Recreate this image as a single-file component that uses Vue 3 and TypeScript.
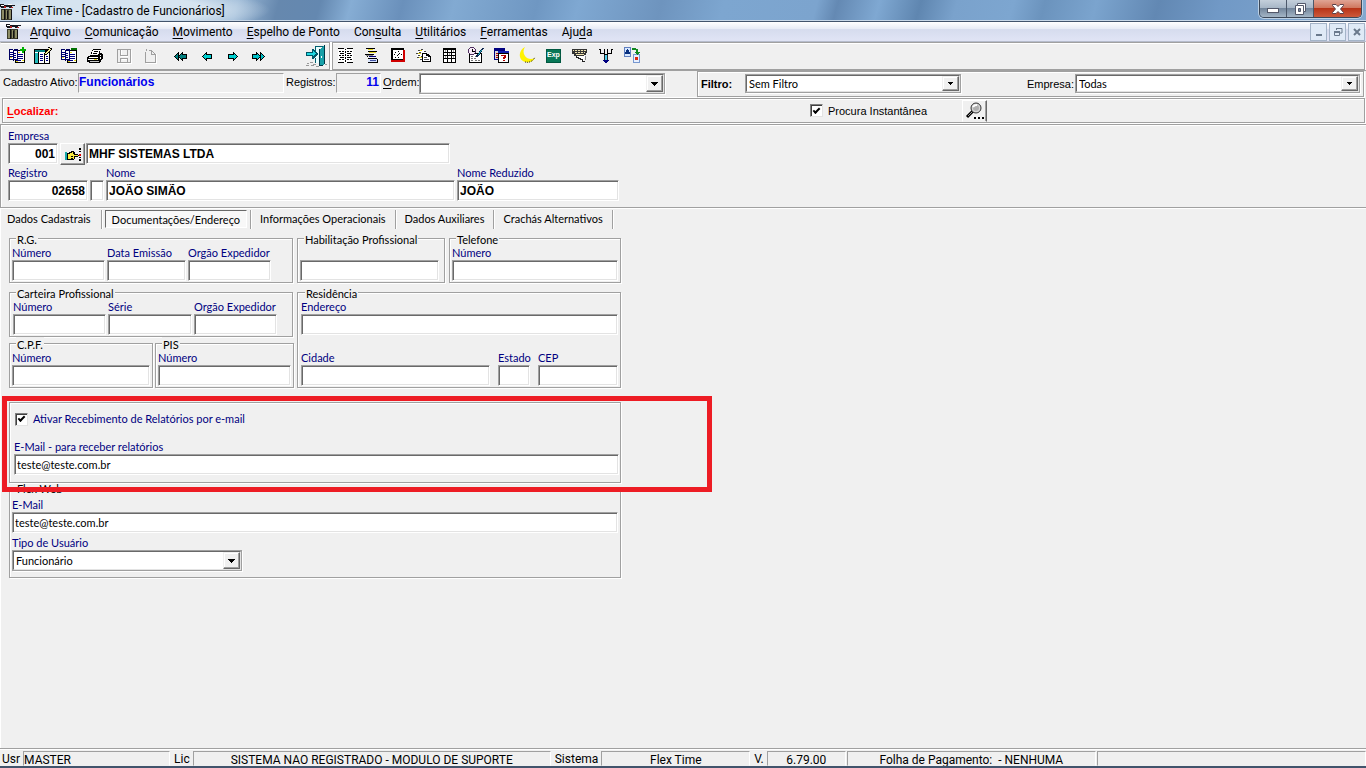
<script setup lang="ts">
import { ref } from 'vue'

interface MenuItem { pre: string; key: string; post: string }

const menus: MenuItem[] = [
  { pre: '', key: 'A', post: 'rquivo' },
  { pre: '', key: 'C', post: 'omunicação' },
  { pre: '', key: 'M', post: 'ovimento' },
  { pre: '', key: 'E', post: 'spelho de Ponto' },
  { pre: 'Con', key: 's', post: 'ulta' },
  { pre: '', key: 'U', post: 'tilitários' },
  { pre: '', key: 'F', post: 'erramentas' },
  { pre: 'Aju', key: 'd', post: 'a' },
]

const tabs = ['Dados Cadastrais', 'Documentações/Endereço', 'Informações Operacionais', 'Dados Auxiliares', 'Crachás Alternativos']
const activeTab = ref(1)

const instant = ref(true)
const sendReports = ref(true)
const companyCode = ref('001')
const companyName = ref('MHF SISTEMAS LTDA')
const register = ref('02658')
const digit = ref('')
const fullName = ref('JOÃO SIMÃO')
const shortName = ref('JOÃO')
const reportMail = ref('teste@teste.com.br')
const webMail = ref('teste@teste.com.br')
</script>

<template>
  <div class="window">
    <header class="titlebar">
      <svg class="app-icon" width="16" height="18" viewBox="0 0 16 18" shape-rendering="crispEdges">
        <path d="M0 1h4v1h2v2H4v1H1V4H0zM6 2h9v1h-3v2H9V4H6z" fill="#16161c" />
        <path d="M1 2h3v1H1zM8 1h4v1H8z" fill="#fff" />
        <path d="M4 3h2v2H4zM11 4h2v1h-2z" fill="#b02020" />
        <path d="M1 6h11v11H1z" fill="#3c3c2c" />
        <path d="M2 7h2v9H2zM6 7h1v9H6zM9 7h2v9H9z" fill="#8c8c66" />
        <path d="M4 6h1v11H4zM7 8h1v8H7zM11 7h1v10h-1z" fill="#111" />
      </svg>
      <h1>Flex Time - [Cadastro de Funcionários]</h1>
      <div class="win-buttons">
        <button type="button" class="wb" aria-label="Minimizar">
          <svg width="14" height="12" viewBox="0 0 14 12"><rect x="1.5" y="5.500" width="11" height="4" fill="#fff" stroke="#53586a" /></svg>
        </button>
        <button type="button" class="wb" aria-label="Restaurar">
          <svg width="14" height="14" viewBox="0 0 14 14"><path d="M4.500 1.500h8v8h-2v3h-8v-9h2z" fill="#fff" stroke="#53586a" /><path d="M5.500 6.500h2v3h-2z" fill="#7a8ba0" stroke="#53586a" /><path d="M4.500 3.500h6v6" fill="none" stroke="#53586a" /></svg>
        </button>
        <button type="button" class="wb close" aria-label="Fechar">
          <svg width="14" height="12" viewBox="0 0 14 12"><path d="M1.500 1.500h3.500l2 2 2-2h3.500v1L9.500 6l3 3.500v1H9l-2-2-2 2H1.500v-1l3-3.500-3-3.500z" fill="#fff" stroke="#5a4048" /></svg>
        </button>
      </div>
    </header>

    <nav class="menubar">
      <svg class="app-icon" width="16" height="18" viewBox="0 0 16 18" shape-rendering="crispEdges">
        <path d="M0 1h4v1h2v2H4v1H1V4H0zM6 2h9v1h-3v2H9V4H6z" fill="#16161c" />
        <path d="M1 2h3v1H1zM8 1h4v1H8z" fill="#fff" />
        <path d="M4 3h2v2H4zM11 4h2v1h-2z" fill="#b02020" />
        <path d="M1 6h11v10H1z" fill="#3c3c2c" />
        <path d="M2 7h2v8H2zM6 7h1v8H6zM9 7h2v8H9z" fill="#8c8c66" />
        <path d="M4 6h1v10H4zM7 8h1v7H7zM11 7h1v9h-1z" fill="#111" />
      </svg>
      <button v-for="m in menus" :key="m.pre + m.key + m.post" type="button">{{ m.pre }}<u>{{ m.key }}</u>{{ m.post }}</button>
      <div class="mdi">
        <button type="button" aria-label="Minimizar documento"><svg width="10" height="10" viewBox="0 0 10 10"><path d="M2 7h6v2H2z" fill="#6a7a8c" /></svg></button>
        <button type="button" aria-label="Restaurar documento"><svg width="10" height="10" viewBox="0 0 10 10"><path d="M3 1.500h6v4.500H7M3.500 3V1" fill="none" stroke="#6a7a8c" /><path d="M3 1h6v1H3z" fill="#6a7a8c" /><path d="M1.500 4.500h5v4h-5z" fill="none" stroke="#6a7a8c" /><path d="M1 4h6v2H1z" fill="#6a7a8c" /></svg></button>
        <button type="button" aria-label="Fechar documento"><svg width="10" height="10" viewBox="0 0 10 10"><path d="M2 2l6 6M8 2l-6 6" stroke="#6a7a8c" stroke-width="2" /></svg></button>
      </div>
    </nav>

    <div class="toolbars">
      <div class="toolbar edit" role="toolbar" aria-label="Cadastro">
        <button type="button" aria-label="Incluir">
          <svg viewBox="0 0 20 20">
            <path d="M8 4h10v13H8z" fill="#000" /><path d="M9 5h8v11H9z" fill="#fff" />
            <path d="M2 3h4v1h1V3h4v11H7v1H6v-1H2z" fill="#000060" /><path d="M3 4h3v9H3zM7 5h3v8H7z" fill="#fff" />
            <path d="M3 6h3v1H3zM3 8h3v1H3zM3 10h3v1H3zM7 7h2v1H7zM7 9h2v1H7zM7 11h2v1H7zM11 8h5v1h-5zM11 10h5v1h-5zM11 12h5v1h-5zM9 14h5v1H9z" fill="#000080" />
            <path d="M9 15h2v1H9zM11 6h2v1h-2zM15 14h2v1h-2zM3 11h2v1H3z" fill="#e8d820" />
            <path d="M15 1h2v2h2v2h-2v2h-2V5h-2V3h2z" fill="#00b000" />
          </svg>
        </button>
        <button type="button" aria-label="Alterar">
          <svg viewBox="0 0 20 20">
            <path d="M1 3h16v15H1z" fill="#000" /><path d="M2 6h14v11H2z" fill="#fff" /><path d="M2 4h10v2H2z" fill="#008080" />
            <path d="M2 7h3v10H2z" fill="#20b8b8" /><path d="M5 6h1v11H5zM11 9h1v8h-1z" fill="#000" />
            <path d="M7 8h3v1H7zM7 10h3v1H7zM7 12h3v1H7zM7 14h3v1H7zM13 10h2v1h-2zM13 12h2v1h-2zM13 14h2v1h-2z" fill="#000080" />
            <path d="M15 1h2v1h2v2h-1v1h-1v1h-1v1h-1v1h-1v1h-3V7h1V6h1V5h1V4h1V3h1z" fill="#000" />
            <path d="M16 2h1v1h1v1h-1v1h-1v1h-1v1h-1v1h-2V7h1V6h1V5h1V4h1z" fill="#f4ee90" />
          </svg>
        </button>
        <button type="button" aria-label="Excluir">
          <svg viewBox="0 0 20 20">
            <path d="M8 4h10v13H8z" fill="#000" /><path d="M9 5h8v11H9z" fill="#fff" />
            <path d="M2 3h4v1h1V3h4v11H7v1H6v-1H2z" fill="#000060" /><path d="M3 4h3v9H3zM7 5h3v8H7z" fill="#fff" />
            <path d="M3 6h3v1H3zM3 8h3v1H3zM3 10h3v1H3zM7 7h2v1H7zM7 9h2v1H7zM7 11h2v1H7zM11 8h5v1h-5zM11 10h5v1h-5zM11 12h5v1h-5zM9 14h5v1H9z" fill="#000080" />
            <path d="M9 15h2v1H9zM11 6h2v1h-2zM15 14h2v1h-2zM3 11h2v1H3z" fill="#e8d820" />
            <path d="M12 2h6v2h-6z" fill="#007000" />
          </svg>
        </button>
        <button type="button" aria-label="Imprimir">
          <svg viewBox="0 0 20 20">
            <path d="M8 3h8v1h-1v3h2v1h1v5h-1v1h-1v2h-1v1H4v-1H2v-5h1v-1h2V9h1V6h1V4h1z" fill="#000" />
            <path d="M8 4h7l-2 5H6z" fill="#fff" /><path d="M9 5h4v1H9zM8 7h4v1H8z" fill="#000" />
            <path d="M4 11h9v1H4zM3 13h10v1H3zM15 9h1v1h-1zM15 11h1v2h-1z" fill="#fff" /><path d="M5 15h9v1H5z" fill="#c8c8c8" /><path d="M9 13h3v1H9z" fill="#e8d820" />
          </svg>
        </button>
        <button type="button" class="gap-small" aria-label="Gravar" disabled>
          <svg viewBox="0 0 20 20"><path d="M4 17h13V4h1v14H4zM7 4h1v6h6v1H7zM8 13h6v1H8z" fill="#fff" /><path d="M3 3h14v14H3zM4 4v12h2v-4h8v4h2V4h-2v6H6V4zM7 4v5h6V4zM7 13v3h6v-3z" fill="#a0a0a0" fill-rule="evenodd" /></svg>
        </button>
        <button type="button" aria-label="Cancelar" disabled>
          <svg viewBox="0 0 20 20"><path d="M6 17h10V8h1v10H6z" fill="#fff" /><path d="M5 6h1v10h9V9h-4V5H9V4h3v1h1v1h1v1h1v1h1v9H5zM12 6v2h2V7h-1V6zM6 3h1v2H6z" fill="#a0a0a0" fill-rule="evenodd" /></svg>
        </button>
        <button type="button" class="gap-wide" aria-label="Primeiro">
          <svg viewBox="0 0 20 20"><path d="M3 10h1V9h1V8h1V7h1V6h1v9H7v-1H6v-1H5v-1H4v-1H3zM7 10h1V9h1V8h1V7h1V6h1v2h4v5h-4v2h-1v-1h-1v-1H9v-1H8v-1H7z" fill="#000" /><path d="M4 10h1V9h1V8h1v5H6v-1H5v-1H4zM8 10h1V9h1V8h1v1h4v3h-4v1h-1v-1H9v-1H8z" fill="#008080" /></svg>
        </button>
        <button type="button" aria-label="Anterior">
          <svg viewBox="0 0 20 20"><path d="M5 10h1V9h1V8h1V7h1V6h1v2h5v5h-5v2H9v-1H8v-1H7v-1H6v-1H5z" fill="#000" /><path d="M6 10h1V9h1V8h1v1h5v3H9v1H8v-1H7v-1H6z" fill="#00d0d0" /></svg>
        </button>
        <button type="button" aria-label="Próximo">
          <svg viewBox="0 0 20 20"><g transform="translate(20 0) scale(-1 1)"><path d="M5 10h1V9h1V8h1V7h1V6h1v2h5v5h-5v2H9v-1H8v-1H7v-1H6v-1H5z" fill="#000" /><path d="M6 10h1V9h1V8h1v1h5v3H9v1H8v-1H7v-1H6z" fill="#00d0d0" /></g></svg>
        </button>
        <button type="button" aria-label="Último">
          <svg viewBox="0 0 20 20"><g transform="translate(19 0) scale(-1 1)"><path d="M3 10h1V9h1V8h1V7h1V6h1v9H7v-1H6v-1H5v-1H4v-1H3zM7 10h1V9h1V8h1V7h1V6h1v2h4v5h-4v2h-1v-1h-1v-1H9v-1H8v-1H7z" fill="#000" /><path d="M4 10h1V9h1V8h1v5H6v-1H5v-1H4zM8 10h1V9h1V8h1v1h4v3h-4v1h-1v-1H9v-1H8z" fill="#00c0c8" /></g></svg>
        </button>
        <button type="button" class="exit" aria-label="Sair">
          <svg width="24" height="24" viewBox="0 0 24 24">
            <path d="M11 2h10v1H11zM11 2h1v6h-1zM11 14h1v5h-1z" fill="#006070" /><path d="M12 3h3v16h-3z" fill="#e8ffff" />
            <path d="M20 1h1v19h-1v1h-2v1h-2V5h1V4h1V3h1V2h1z" fill="#18a0a8" /><path d="M20 1h1v19h-1zM15 5h1v17h-1zM16 21h3v1h-3z" fill="#003848" />
            <path d="M3 19h2v1H3zM6 18h3v1H6zM9 20h3v1H9zM2 21h3v1H2zM7 21h3v1H7zM21 20h2v1h-2zM12 22h3v1h-3z" fill="#999" />
            <path d="M2 8h6V5h2v1h1v1h1v1h1v1h1v2h-1v1h-1v1h-1v1h-1v1H8v-3H2z" fill="#005868" /><path d="M3 9h6V7h1v1h1v1h1v1h-1v1h-1v1H9v-1H3z" fill="#20d8e0" /><path d="M17 12h1v2h-1z" fill="#fff" />
          </svg>
        </button>
      </div>
      <div class="toolbar tools" role="toolbar" aria-label="Ferramentas">
        <button type="button" aria-label="Livro">
          <svg viewBox="0 0 20 20"><path d="M2 3h15v14H2z" fill="#fff" /><path d="M2 2h6v1H2zM11 2h6v1h-6zM2 16h6v1H2zM11 16h6v1h-6zM9 3h1v1H9zM9 5h1v2H9zM9 8h1v2H9zM9 11h1v2H9zM9 14h1v2H9zM3 5h2v1H3zM6 5h2v1H6zM4 7h4v1H4zM3 9h2v1H3zM6 9h2v1H6zM4 11h4v1H4zM3 13h2v1H3zM6 13h2v1H6zM11 5h2v1h-2zM14 5h2v1h-2zM11 7h4v1h-4zM11 9h2v1h-2zM14 9h2v1h-2zM11 11h4v1h-4zM11 13h2v1h-2zM14 13h2v1h-2z" fill="#000" /></svg>
        </button>
        <button type="button" aria-label="Horários">
          <svg viewBox="0 0 20 20"><path d="M4 2h9v1H4zM6 5h9v1H6zM3 8h9v1H3zM6 12h9v1H6zM15 13h1v4h-1zM6 16h9v1H6zM5 9h1v2H5z" fill="#000" /><path d="M6 3h5v1H6zM7 6h7v1H7z" fill="#e8d820" /><path d="M4 9h7v1H4z" fill="#888" /><path d="M7 10h7v1H7z" fill="#000080" /><path d="M6 13h9v3H6z" fill="#d8e4ff" /><path d="M8 14h6v1H8z" fill="#4050a0" /></svg>
        </button>
        <button type="button" aria-label="Relógio">
          <svg viewBox="0 0 20 20"><path d="M3 2h13v14H3z" fill="#000" /><path d="M5 4h10v9H5z" fill="#fff" /><path d="M3 14h14v2H3zM15 4h2v12h-2z" fill="#d00000" /><path d="M10 5h1v1h-1zM6 8h1v1H6zM13 8h1v1h-1zM9 9h1v1H9zM10 8h1v1h-1zM11 7h1v1h-1zM10 11h1v1h-1zM7 6h1v1H7zM7 11h1v1H7z" fill="#000" /></svg>
        </button>
        <button type="button" aria-label="Lançamentos">
          <svg viewBox="0 0 20 20"><path d="M3 6l5-3 4 2v7l-4 3-5-3z" fill="#fff" /><path d="M4 4h2v1H4zM7 3h2v1H7zM10 5h2v1h-2zM2 7h2v1H2zM5 6h2v1H5zM4 9h2v1H4zM3 11h2v1H3zM6 13h2v1H6zM7 10h1v1H7z" fill="#444" /><path d="M6 4h2v1H6zM4 7h3v1H4zM5 11h3v1H5z" fill="#e0d020" /><path d="M8 7h5v1h2v1h1v1h1v6H8z" fill="#000" /><path d="M9 8h3v2h2v1h2v4H9z" fill="#fff" /><path d="M10 11h3v1h-3zM10 13h5v1h-5z" fill="#555" /></svg>
        </button>
        <button type="button" aria-label="Tabela">
          <svg viewBox="0 0 20 20"><path d="M3 2h13v15H3z" fill="#000" /><path d="M4 4h3v2H4zM8 4h3v2H8zM12 4h3v2h-3zM4 7h3v2H4zM8 7h3v2H8zM12 7h3v2h-3zM4 10h3v2H4zM8 10h3v2H8zM12 10h3v2h-3zM4 13h3v3H4zM8 13h3v3H8zM12 13h3v3h-3z" fill="#fff" /><path d="M5 4h1v2H5zM9 7h1v2H9zM13 10h1v2h-1zM5 10h1v2H5zM13 4h1v2h-1z" fill="#aaa" /></svg>
        </button>
        <button type="button" aria-label="Ajustes de ponto">
          <svg viewBox="0 0 20 20"><path d="M3 7h13v10H3z" fill="#000" /><path d="M4 8h11v8H4z" fill="#fff" /><path d="M5 10h2v1H5zM9 10h2v1H9zM5 12h2v1H5zM8 12h2v1H8zM5 14h2v1H5zM9 14h2v1H9zM12 14h2v1h-2z" fill="#777" /><circle cx="6" cy="5" r="4" fill="#503060" /><circle cx="6" cy="5" r="3" fill="#f8ecf8" /><path d="M6 3h1v2h2v1H6z" fill="#000" /><path d="M16 2h2v1h-1v1h-1v2h-1v1h-1v2h-1v1h-1v1h-2V9h1V8h1V7h1V5h1V4h1V3h1z" fill="#102850" /><path d="M15 4h1v1h-1v1h-1v2h-1v1h-1V8h1V6h1V5h1z" fill="#20b8c0" /></svg>
        </button>
        <button type="button" aria-label="Calendário">
          <svg viewBox="0 0 20 20"><path d="M2 2h11v12H2z" fill="#000080" /><path d="M3 5h9v8H3z" fill="#d8d8d8" /><path d="M4 7h2v1H4zM4 9h2v1H4zM4 11h2v1H4z" fill="#b00000" /><path d="M6 5h11v12H6z" fill="#000" /><path d="M6 5h11v2H6z" fill="#1020b0" /><path d="M7 8h9v8H7z" fill="#fff" /><path d="M9 9h5v3h-1v1h-2v-2h1v-1H9zM11 14h2v1h-2z" fill="#b00000" /></svg>
        </button>
        <button type="button" aria-label="Noturno">
          <svg viewBox="0 0 20 20" class="smooth"><path d="M7 1C1 4 0 12 5 15c5 3 10 1 12-3-4 2-8 1-10-2-2-3-2-6 0-9z" fill="#fff200" /><path d="M7 16c5 1 8-1 10-5" fill="none" stroke="#333" stroke-dasharray="1 1" /></svg>
        </button>
        <button type="button" aria-label="Exportar">
          <svg viewBox="0 0 20 20"><path d="M2 3h15v14H2z" fill="#005840" /><path d="M3 4h13v12H3z" fill="#087858" /><text x="3" y="11" font-size="7" font-weight="700" fill="#fff" font-family="Liberation Sans, sans-serif">Exp</text></svg>
        </button>
        <button type="button" aria-label="Coletor">
          <svg viewBox="0 0 20 20"><path d="M2 3h15v4h-1v2h-2v1H4V8H2z" fill="#333" /><path d="M3 4h13v1H3zM5 6h10v1H5zM6 8h8v1H6z" fill="#f0e4b0" /><path d="M4 4h1v1H4zM7 4h1v1H7zM10 4h1v1h-1zM13 4h1v1h-1zM7 6h1v1H7zM10 6h1v1h-1zM13 6h1v1h-1z" fill="#444" /><path d="M7 10h8v2h-1v3h-3v-2H9v-1H7z" fill="#fff" /><path d="M6 10h1v1h2v1h2v1h2v2h2v1h-3v-2h-2v-1H8v-1H6z" fill="#222" /><path d="M15 10h1v4h-1z" fill="#888" /></svg>
        </button>
        <button type="button" aria-label="Distribuir">
          <svg viewBox="0 0 20 20"><path d="M4 3h1v4h3V3h1v5H4zM11 3h1v4h3V3h1v5h-5zM3 3h1v1H3zM16 3h1v1h-1zM8 8h4v1H8z" fill="#000" /><path d="M8 9h1v5H8zM11 9h1v5h-1z" fill="#222" /><path d="M9 9h2v5H9z" fill="#50d0f0" /><path d="M7 14h6v1h-1v1h-1v1h-2v-1H8v-1H7z" fill="#000080" /></svg>
        </button>
        <button type="button" aria-label="Conversão">
          <svg viewBox="0 0 20 20"><path d="M2 1h7v10H2z" fill="#6080c0" /><path d="M3 2h5v8H3z" fill="#d8e8ff" /><path d="M5 3h1v1h1v2h1v2H3V6h1V4h1z" fill="#083080" /><path d="M11 8h7v9h-7z" fill="#7898d0" /><path d="M12 9h5v7h-5z" fill="#e8f0ff" /><path d="M13 11h3v3h-3z" fill="#e02810" /><path d="M10 2h4v1h2v3h2l-3 3-3-3h2V4h-4z" fill="#108820" /></svg>
        </button>
      </div>
    </div>

    <div class="context">
      <div class="context-left">
        <span>Cadastro Ativo:</span>
        <output class="cell active-name">Funcionários</output>
        <span class="registers">Registros:</span>
        <output class="cell count">11</output>
        <label for="ordem"><u>O</u>rdem:</label>
        <span class="combo order">
          <select id="ordem"><option></option></select>
          <i aria-hidden="true"><svg width="7" height="4" viewBox="0 0 7 4"><path d="M0 0h7v1H6v1H5v1H4v1H3V3H2V2H1V1H0z" /></svg></i>
        </span>
      </div>
      <div class="context-right">
        <label for="filtro" class="strong">Filtro:</label>
        <span class="combo filter">
          <select id="filtro"><option>Sem Filtro</option></select>
          <i aria-hidden="true"><svg width="5" height="3" viewBox="0 0 5 3"><path d="M0 0h5v1H4v1H3v1H2V2H1V1H0z" /></svg></i>
        </span>
        <label for="empresa-filtro" class="company">Empresa:</label>
        <span class="combo company-combo">
          <select id="empresa-filtro"><option>Todas</option></select>
          <i aria-hidden="true"><svg width="5" height="3" viewBox="0 0 5 3"><path d="M0 0h5v1H4v1H3v1H2V2H1V1H0z" /></svg></i>
        </span>
      </div>
    </div>

    <div class="search">
      <span class="locate"><u>L</u>ocalizar:</span>
      <label class="check"><input v-model="instant" type="checkbox" />Procura Instantânea</label>
      <button type="button" class="find" aria-label="Pesquisar">
        <svg width="20" height="20" viewBox="0 0 20 20"><path d="M2 16l6-6" stroke="#000" stroke-width="3" /><path d="M3 15l5-5" stroke="#999" /><circle cx="11" cy="7" r="5" fill="#d4d4d4" stroke="#333" /><circle cx="11" cy="7" r="3" fill="#b0b0b0" /><path d="M8 6c1-2 3-2 4-2" stroke="#fff" stroke-width="2" fill="none" /><path d="M9 16h2v2H9zM13 16h2v2h-2zM17 16h2v2h-2z" fill="#000" /></svg>
      </button>
    </div>

    <section class="identity">
      <div class="field-label"><label for="emp">Empresa</label></div>
      <div class="id-row company-row">
        <input id="emp" v-model="companyCode" class="box bold right" />
        <button type="button" class="hand" aria-label="Selecionar empresa">
          <svg width="20" height="16" viewBox="0 0 20 16" shape-rendering="crispEdges"><path d="M2 6h2v8H2z" fill="#18a8a8" /><path d="M4 7h2V6h2V5h3v1h1v2h3v1h1v1h-1v1h-3v2h-1v1H4z" fill="#000" /><path d="M5 8h2V7h2V6h1v2h1v1h4v1h-4v3H5z" fill="#f8e840" /><path d="M8 10h2v1H8zM8 12h2v1H8z" fill="#000" /><path d="M16 2h2v2h-2zM16 5h2v1h-2zM16 11h2v1h-2zM16 13h2v2h-2z" fill="#000" /><path d="M16 8h2v2h-2z" fill="#e00000" /></svg>
        </button>
        <input v-model="companyName" class="box bold" aria-label="Nome da empresa" />
      </div>
      <div class="id-row names labels">
        <label for="reg">Registro</label><span></span><label for="nome">Nome</label><label for="red">Nome Reduzido</label>
      </div>
      <div class="id-row names">
        <input id="reg" v-model="register" class="box bold right" />
        <input v-model="digit" class="box bold" aria-label="Dígito" />
        <input id="nome" v-model="fullName" class="box bold" />
        <input id="red" v-model="shortName" class="box bold" />
      </div>
    </section>

    <div class="tabs" role="tablist">
      <div v-for="(t, i) in tabs" :key="t" class="tab-slot">
        <button type="button" role="tab" :aria-selected="i === activeTab" :class="{ active: i === activeTab }" @click="activeTab = i">{{ t }}</button>
      </div>
    </div>

    <main class="form">
      <div class="row top-row">
        <fieldset class="g-rg">
          <legend>R.G.</legend>
          <div class="cols">
            <label>Número<input class="box" /></label>
            <label>Data Emissão<input class="box" /></label>
            <label>Orgão Expedidor<input class="box" /></label>
          </div>
        </fieldset>
        <fieldset class="g-hab">
          <legend>Habilitação Profissional</legend>
          <input class="box unlabelled" aria-label="Habilitação Profissional" />
        </fieldset>
        <fieldset class="g-tel">
          <legend>Telefone</legend>
          <label>Número<input class="box" /></label>
        </fieldset>
      </div>

      <div class="row docs-row">
        <div class="docs">
          <fieldset class="g-ctps">
            <legend>Carteira Profissional</legend>
            <div class="cols">
              <label>Número<input class="box" /></label>
              <label>Série<input class="box" /></label>
              <label>Orgão Expedidor<input class="box" /></label>
            </div>
          </fieldset>
          <div class="row pair">
            <fieldset><legend>C.P.F.</legend><label>Número<input class="box" /></label></fieldset>
            <fieldset><legend>PIS</legend><label>Número<input class="box" /></label></fieldset>
          </div>
        </div>
        <fieldset class="g-res">
          <legend>Residência</legend>
          <label>Endereço<input class="box" /></label>
          <div class="cols">
            <label>Cidade<input class="box" /></label>
            <label>Estado<input class="box" /></label>
            <label>CEP<input class="box" /></label>
          </div>
        </fieldset>
      </div>

      <div class="reports">
        <label class="check"><input v-model="sendReports" type="checkbox" />Ativar Recebimento de Relatórios por e-mail</label>
        <label class="mail">E-Mail - para receber relatórios<input v-model="reportMail" class="box" /></label>
        <span class="highlight" aria-hidden="true"></span>
      </div>

      <fieldset class="web">
        <legend>Flex Web</legend>
        <label>E-Mail<input v-model="webMail" class="box" /></label>
        <label class="kind" for="tipo">Tipo de Usuário</label>
        <span class="combo user-kind">
          <select id="tipo"><option>Funcionário</option></select>
          <i aria-hidden="true"><svg width="7" height="4" viewBox="0 0 7 4"><path d="M0 0h7v1H6v1H5v1H4v1H3V3H2V2H1V1H0z" /></svg></i>
        </span>
      </fieldset>
    </main>

    <footer class="status">
      <span class="tag">Usr</span><span class="slot user">MASTER</span>
      <span class="tag">Lic</span><span class="slot licence">SISTEMA NAO REGISTRADO - MODULO DE SUPORTE</span>
      <span class="tag">Sistema</span><span class="slot system">Flex Time</span>
      <span class="tag">V.</span><span class="slot version">6.79.00</span>
      <span class="slot payroll">Folha de Pagamento:&nbsp; - NENHUMA</span>
      <span class="slot rest"></span>
    </footer>
  </div>
</template>

<style>
body {
  background: #f0f0f0;
}
</style>

<style scoped>
.window {
  --ui: Roboto, "Noto Sans", sans-serif;
  --form: Lato, "Liberation Sans", sans-serif;
  box-sizing: border-box;
  min-height: 100vh;
  display: flex;
  flex-direction: column;
  background: #f0f0f0;
  color: #000;
  font: 11px/14px "Liberation Sans", Arial, sans-serif;
  overflow: hidden;
}
.window *, .window *::before { box-sizing: border-box; }
button { margin: 0; padding: 0; border: 0; background: none; color: inherit; font: inherit; }
input, select { margin: 0; font: inherit; color: #000; border-radius: 0; outline: 0; }
u { text-underline-offset: 2px; }

.titlebar {
  display: flex;
  height: 22px;
  border-bottom: 1px solid #42546c;
  box-shadow: inset 0 -1px #c8d8e8;
  background:
    radial-gradient(ellipse 160px 24px at 110px 10px, #d6e4f0 0 60%, transparent),
    linear-gradient(105deg, #a9c5e0 0, #9ab8d6 230px, #6688ae 270px, #6488b0 310px, #86add4 340px, #6a90bb 390px, #82aad2 440px, #6f97c2 520px, #7fa8d2 560px, #6e94be 640px, #7da6d0 700px, #7ca4ce 790px, #6489b3 810px, #7fa8d2 850px, #5f86b0 890px, #7aa2cc 925px, #7da6d0 980px, #6b93bd 1010px, #7ba4ce 1060px, #6288b3 1120px, #7199c6 1180px, #83a9d0 100%);
}
.titlebar .app-icon { margin-top: 3px; }
.titlebar h1 { margin: 0 0 0 5px; font: 12px/22px var(--ui); white-space: nowrap; }
.win-buttons { display: flex; height: 18px; margin: 0 4px 0 auto; border: 1px solid #3c4858; border-top: 0; border-radius: 0 0 5px 5px; box-shadow: 0 0 0 1px #bcd0e4; overflow: hidden; }
.wb { display: flex; align-items: center; justify-content: center; width: 27px; background: linear-gradient(#c4cfdb 0, #a8b7c7 45%, #73869c 50%, #a4b5c6); border-right: 1px solid #4c586a; }
.wb.close { width: 47px; border: 0; background: linear-gradient(#e0a494 0, #d07860 45%, #b83418 50%, #cc5a3c); }

.menubar { display: flex; height: 20px; padding-left: 6px; background: linear-gradient(#fff 0, #e8ecf6 35%, #d6dcee 40%, #dfe3f4 90%); border-bottom: 1px solid #b6bccc; }
.menubar .app-icon { margin: 1px 1px 0 0; }
.menubar > button { padding: 0 7px; font: 12px/20px var(--ui); white-space: nowrap; }
.mdi { display: flex; gap: 2px; margin: 1px 1px 0 auto; }
.mdi button { width: 17px; height: 18px; display: flex; align-items: center; justify-content: center; border: 1px solid #a4b4c8; background: #dfeaf6; }

.toolbars { display: flex; gap: 2px; height: 28px; background: #fff; padding-right: 1px; }
.toolbar { display: flex; align-items: center; background: #f0f0f0; border: 1px solid #a0a0a0; border-left-color: #f0f0f0; box-shadow: inset 0 1px #fff; }
.toolbar button { width: 26px; height: 24px; display: flex; align-items: center; justify-content: center; flex: none; }
.toolbar svg { width: 20px; height: 20px; shape-rendering: crispEdges; }
.toolbar svg.smooth { shape-rendering: auto; }
.edit { width: 330px; padding-left: 3px; }
.edit .gap-small { margin-left: 3px; }
.edit .gap-wide { margin-left: 5px; }
.edit .exit { margin: 0 0 0 auto; }
.edit .exit svg { width: 24px; height: 24px; }
.tools { flex: 1; border-left-color: #a0a0a0; }

.context { display: flex; align-items: stretch; height: 28px; border-top: 1px solid #a0a0a0; }
.context-left { display: flex; align-items: flex-start; flex: none; width: 697px; padding: 2px 0 0 3px; line-height: 19px; border-bottom: 1px solid #fff; }
.context-left > span:first-child { width: 75px; white-space: nowrap; }
.cell { display: block; height: 20px; border: 1px solid #a0a0a0; border-color: #a0a0a0 #fff #fff #a0a0a0; color: #00e; font: bold 12px/16px "Liberation Sans", Arial, sans-serif; padding: 0 1px; }
.active-name { width: 206px; padding: 0; }
.registers { width: 52px; padding-left: 2px; }
.count { width: 45px; text-align: right; }
.context-left label { width: 38px; padding-left: 2px; }
.context-right { display: flex; flex: 1; height: 26px; margin-right: 2px; padding: 2px 3px 0; line-height: 20px; border: 1px solid #a0a0a0; box-shadow: inset 1px 1px #fff, 1px 1px #fff; }
.context-right .strong { width: 44px; font-weight: bold; }
.context-right .company { margin-left: auto; padding-right: 1px; }

.combo { position: relative; display: block; height: 21px; flex: none; font-family: var(--form); }
.combo select { display: block; width: 100%; height: 100%; padding: 0 2px; appearance: none; border: 2px solid; border-color: #696969 #e3e3e3 #e3e3e3 #696969; background: #fff; box-shadow: 1px 1px #fff; outline: 1px solid #a0a0a0; outline-offset: -1px; line-height: 15px; }
.combo i { position: absolute; top: 2px; right: 2px; bottom: 2px; width: 17px; display: flex; align-items: center; justify-content: center; background: #f0f0f0; border: 1px solid; border-color: #f0f0f0 #696969 #696969 #f0f0f0; box-shadow: inset -1px -1px #a0a0a0, inset 1px 1px #fff; pointer-events: none; }
.order { width: 246px; }
.filter { width: 216px; height: 19px; }
.company-combo { width: 285px; height: 19px; }

.search { display: flex; align-items: center; height: 25px; margin: 0 1px 1px 2px; border: 1px solid #a0a0a0; box-shadow: inset 1px 1px #fff, 1px 1px #fff; }
.locate { width: 807px; padding-left: 4px; color: #f00; font-weight: bold; }
.check { display: flex; align-items: center; white-space: nowrap; }
.check input { width: 13px; height: 13px; margin-right: 5px; appearance: none; background: #fff; border: 1px solid; border-color: #808080 #e3e3e3 #e3e3e3 #808080; box-shadow: inset 1px 1px #404040; display: flex; align-items: center; justify-content: center; }
.check input:checked::before { content: ""; width: 7px; height: 4px; margin-top: -2px; border: solid #000; border-width: 0 0 2px 2px; transform: rotate(-45deg); }
.search .check { width: 152px; }
.find { width: 25px; height: 22px; display: flex; align-items: center; justify-content: center; border: 1px solid; border-color: #fff #696969 #f0f0f0 #fff; box-shadow: inset -1px 0 #a0a0a0; }

.identity { height: 84px; padding: 4px 0 0 7px; border: 1px solid #a0a0a0; border-right-width: 0; box-shadow: inset 1px 1px #fff, 0 1px #fff; color: #000080; font-family: var(--form); }
.box { display: block; width: 100%; height: 21px; padding: 1px 2px; background: #fff; border: 1px solid; border-color: #a0a0a0 #fff #fff #a0a0a0; box-shadow: inset 1px 1px #696969, inset -1px -1px #e3e3e3; }
.bold { font: bold 12px/17px "Liberation Sans", Arial, sans-serif; }
.right { text-align: right; }
.id-row { display: grid; align-items: start; }
.company-row { grid-template-columns: 50px 26px 364px; column-gap: 1px; }
.hand { width: 25px; height: 22px; margin-left: 1px; display: flex; align-items: center; justify-content: center; border: 1px solid; border-color: #fff #696969 #696969 #fff; box-shadow: inset -1px -1px #a0a0a0; }
.names { grid-template-columns: 80px 14px 349px 162px; column-gap: 2px; }
.names.labels { margin-top: 1px; }

.tabs { display: flex; height: 21px; padding: 2px 0 0 1px; border-left: 1px solid #fff; font-family: var(--form); }
.tab-slot { padding: 0 3px; border-right: 1px solid #a0a0a0; box-shadow: 1px 0 #fff; }
.tab-slot button { height: 18px; padding: 0 5px; border: 1px solid transparent; white-space: nowrap; }
.tab-slot:first-child { padding: 0 4px 0 0; }
.tab-slot:first-child button { padding-left: 4px; }
.tab-slot .active { padding: 1px 6px 0; border-color: #696969 #fff #fff #696969; background: #f8f8f8; }

.form { flex: 1; width: 621px; padding: 3px 0 0 8px; border-left: 1px solid #fff; font-family: var(--form); }
.row { display: flex; }
fieldset { min-width: 0; margin: 0; padding: 2px 2px 1px; border: 1px solid #a0a0a0; box-shadow: inset 1px 1px #fff, 1px 1px #fff; }
legend { height: 12px; margin-left: 4px; padding: 0 1px; line-height: 16px; background: #f0f0f0; white-space: nowrap; }
fieldset label, .mail { display: block; color: #000080; white-space: nowrap; }
.cols { display: grid; column-gap: 2px; }
.top-row { gap: 4px; }
.g-rg { width: 284px; }
.g-rg .cols { grid-template-columns: 93px 79px 83px; }
.g-hab { width: 148px; }
.unlabelled { width: 139px; margin-top: 14px; }
.g-tel { width: 172px; }
.docs-row { gap: 4px; margin-top: 3px; }
.docs { width: 284px; }
.g-ctps .cols { grid-template-columns: 93px 84px 83px; margin-left: 1px; }
.pair { width: 285px; gap: 2px; }
.pair fieldset:first-child { width: 144px; }
.pair fieldset:last-child { width: 139px; }
.g-res { width: 324px; padding-left: 3px; }
.g-res .cols { grid-template-columns: 189px 32px 80px; column-gap: 8px; margin-top: 16px; }

.reports { position: relative; margin-top: 14px; height: 81px; padding: 9px 1px 0 4px; border: 1px solid #a0a0a0; box-shadow: inset 1px 1px #fff, 1px 1px #fff; color: #000080; }
.reports .check { margin-left: 1px; }
.mail { margin-top: 14px; }
.highlight { position: absolute; z-index: 1; inset: -7px -92px -10px -8px; border: 5px solid #ed1c24; pointer-events: none; }
.web { margin-top: -2px; padding: 5px 2px 6px; }
.kind { margin-top: 3px; }
.user-kind { width: 230px; }

.status { display: flex; height: 20px; padding-top: 2px; border-top: 1px solid #a0a0a0; border-bottom: 2px solid #42546c; box-shadow: inset 0 1px #fff; font: 12px/17px var(--ui); white-space: nowrap; overflow: hidden; }
.tag { flex: none; padding: 0 3px; }
.tag:first-child { padding-left: 2px; }
.slot { flex: none; border: 1px solid; border-color: #a0a0a0 #fff #f0f0f0 #a0a0a0; text-align: center; line-height: 16px; margin-right: 1px; }
.user { width: 147px; text-align: left; }
.licence { width: 358px; }
.system { width: 149px; }
.version { width: 79px; }
.payroll { width: 249px; }
.rest { flex: 1; margin: 0; }
</style>
